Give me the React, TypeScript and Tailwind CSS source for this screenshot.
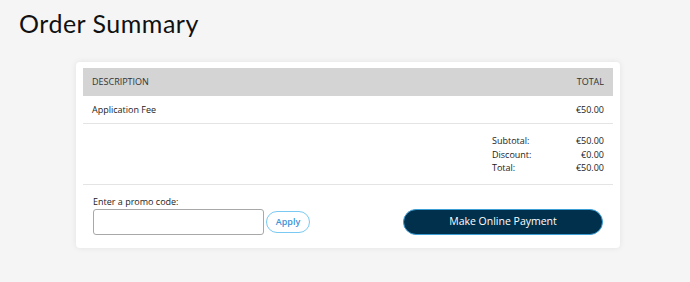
export default function App() {
  return (
    <div className="min-h-[282px] w-[690px] bg-[#f5f5f5] font-['Open_Sans',sans-serif] text-[#222]">
      <h1 className="pl-[19px] pt-[6px] font-['Lato',sans-serif] text-[25px] font-normal leading-[34px] tracking-[0.5px] text-[#111]">
        Order Summary
      </h1>

      <div className="ml-[76px] mt-[22px] w-[544px] rounded-[4px] bg-white px-[7px] pt-[6px] pb-[13px] shadow-[0_0_6px_rgba(0,0,0,0.08)]">
        {/* Table header */}
        <div className="flex h-[28px] items-center justify-between bg-[#d4d4d4] px-[9px] text-[9px] text-[#333]">
          <span>DESCRIPTION</span>
          <span>TOTAL</span>
        </div>

        {/* Items */}
        <div className="flex h-[28px] items-center justify-between border-b border-[#e4e4e4] px-[9px] text-[9px]">
          <span>Application Fee</span>
          <span>€50.00</span>
        </div>

        {/* Totals */}
        <div className="flex justify-end border-b border-[#e4e4e4] pr-[9px] pt-[10px] pb-[9px] text-[9px] leading-[13.5px]">
          <div className="grid w-[112px] grid-cols-2">
            <span>Subtotal:</span>
            <span className="text-right">€50.00</span>
            <span>Discount:</span>
            <span className="text-right">€0.00</span>
            <span>Total:</span>
            <span className="text-right">€50.00</span>
          </div>
        </div>

        {/* Promo + payment */}
        <div className="flex items-end justify-between pl-[10px] pr-[10px] pt-[10px]">
          <div>
            <div className="text-[9px] leading-[13px]">Enter a promo code:</div>
            <div className="mt-[1px] flex items-center gap-[2px]">
              <input className="h-[26px] w-[171px] rounded-[3px] border border-[#a8a8a8] bg-white outline-none" />
              <button className="h-[22px] w-[44px] rounded-full border border-[#79c9f2] bg-white text-[9px] font-semibold text-[#3d93d6]">
                Apply
              </button>
            </div>
          </div>
          <button className="h-[26px] w-[200px] rounded-full border border-[#3b9fd6] bg-[#00304c] text-[10.5px] font-medium text-white">
            Make Online Payment
          </button>
        </div>
      </div>
    </div>
  );
}
